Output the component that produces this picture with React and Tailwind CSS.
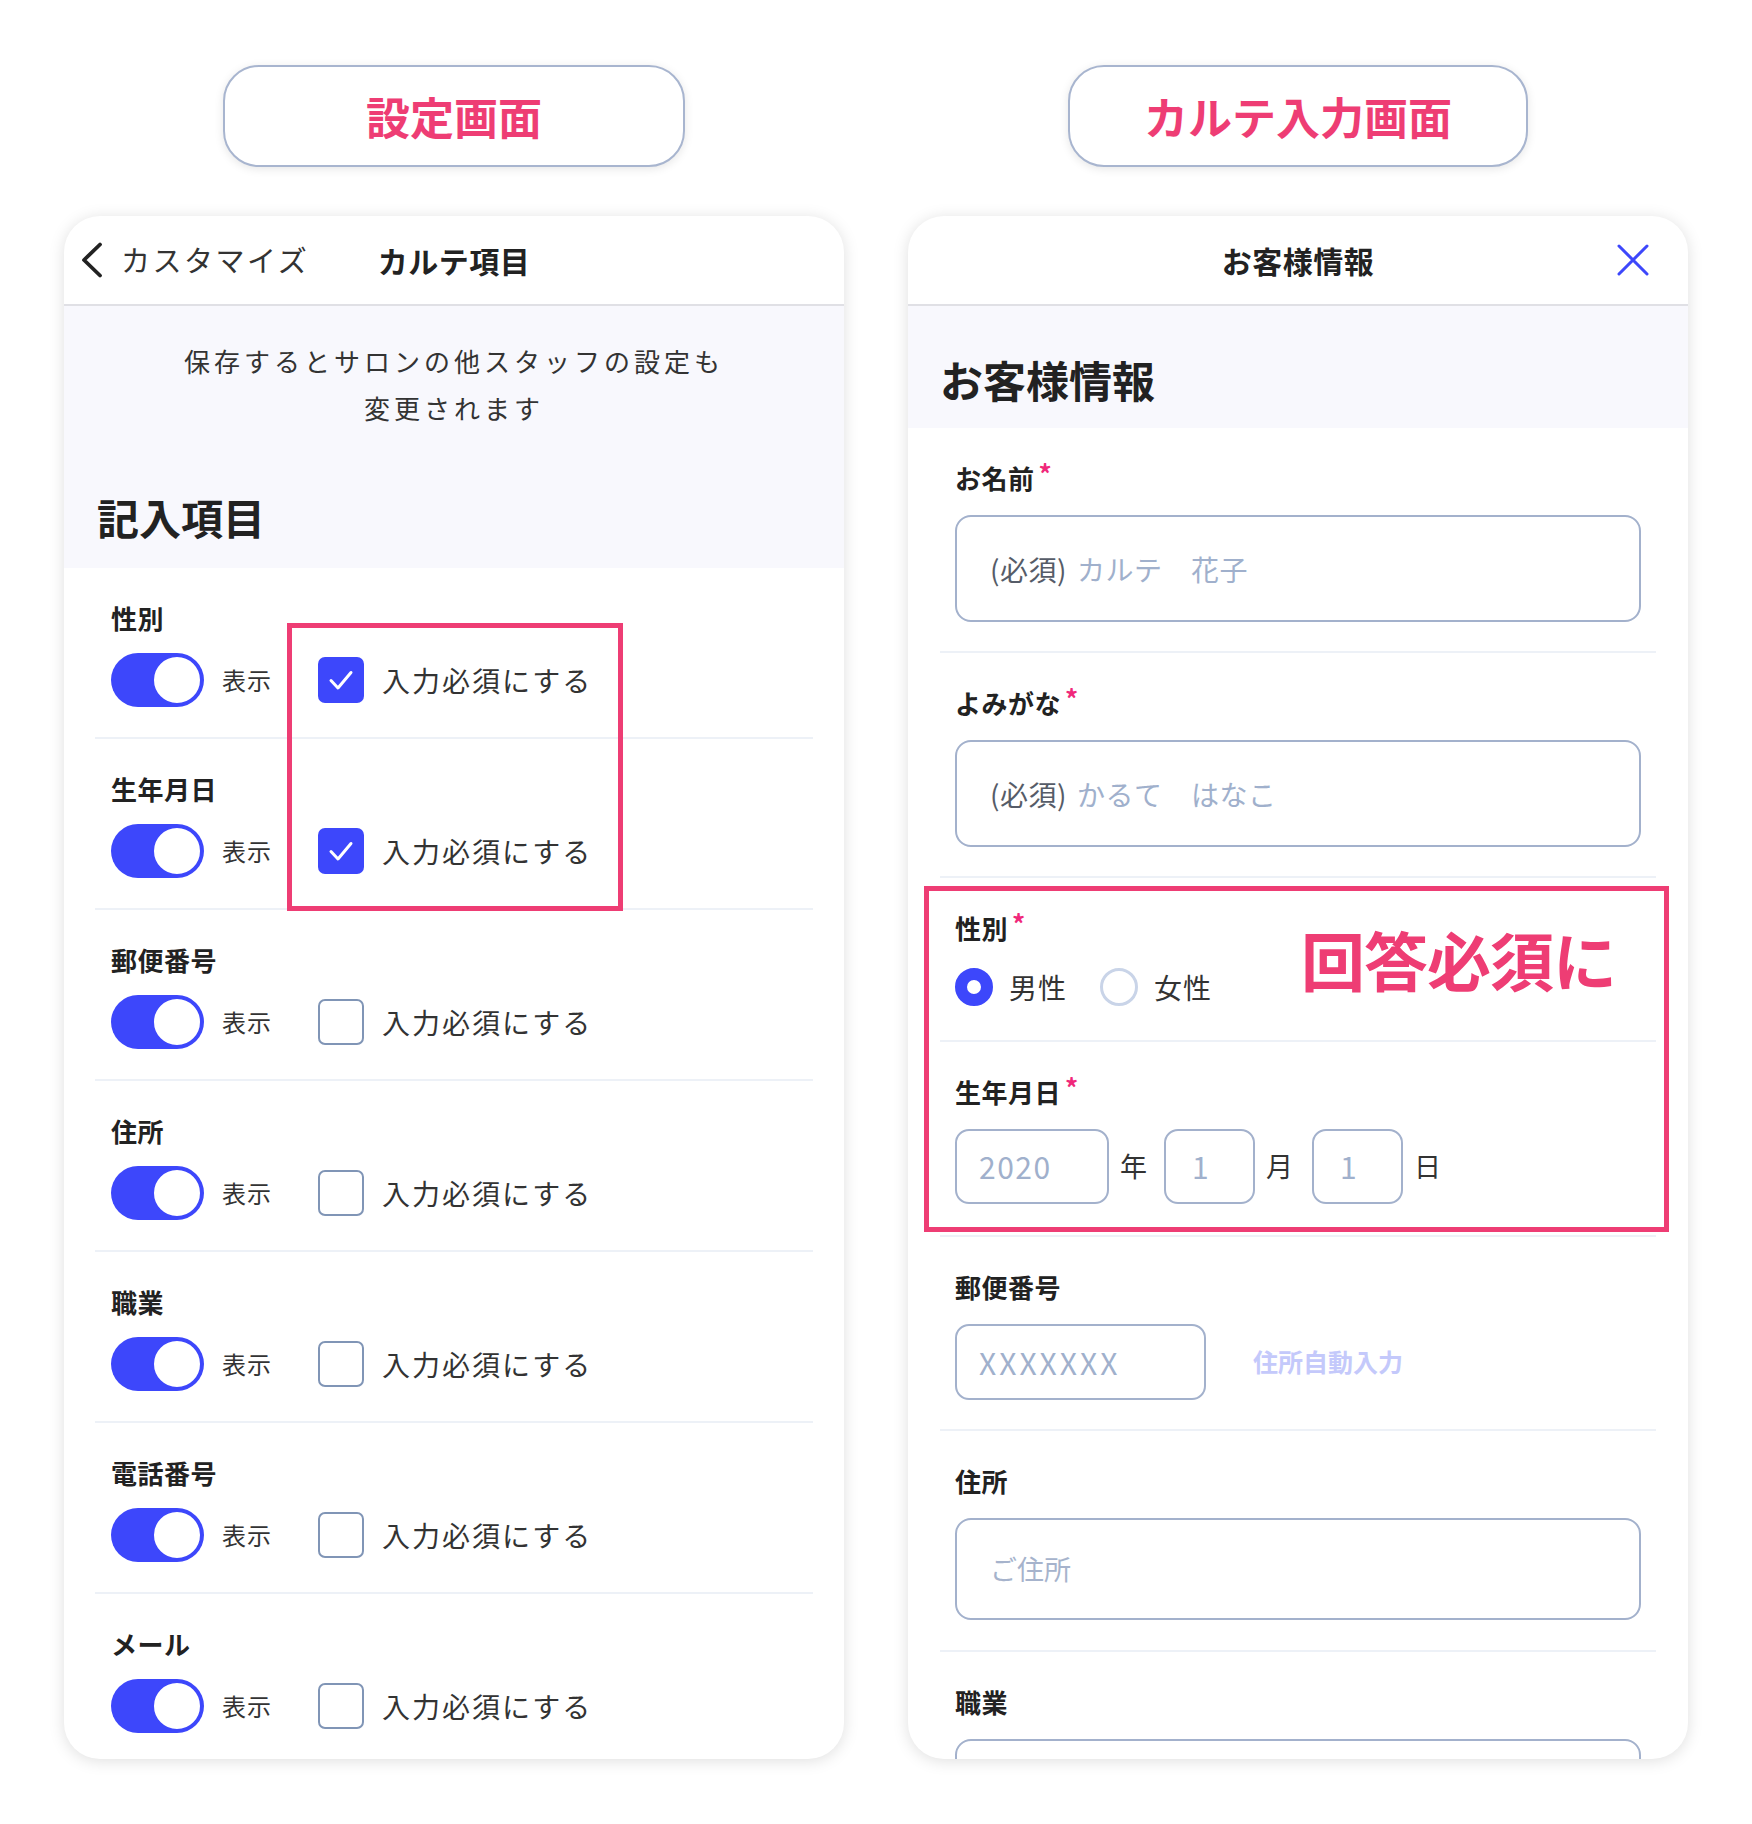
import React from "react";

function TitleButton({ children, wide }) {
  return (
    <div
      className={
        (wide ? "w-[460px]" : "w-[462px]") +
        " h-[102px] shrink-0 rounded-[36px] border-2 border-[#a8b5cf] bg-white shadow-[0_2px_10px_rgba(0,0,0,0.10)] flex items-center justify-center text-[44px] font-bold leading-none text-[#ee3d74]"
      }
    >
      {children}
    </div>
  );
}

function Toggle() {
  return (
    <div className="w-[93px] h-[54px] shrink-0 rounded-full bg-[#3d47fb] flex items-center justify-end pr-[2px]">
      <div className="w-[50px] h-[50px] rounded-full bg-white border-2 border-[#3d47fb]" />
    </div>
  );
}

function Checkbox({ checked }) {
  if (checked) {
    return (
      <div className="ml-[46px] w-[46px] h-[46px] shrink-0 rounded-[7px] bg-[#3d47fb] flex items-center justify-center">
        <svg width="30" height="30" viewBox="0 0 30 30">
          <path d="M5 15.5 L12 23 L25 7.5" stroke="#fff" strokeWidth="3" fill="none" strokeLinecap="round" strokeLinejoin="round" />
        </svg>
      </div>
    );
  }
  return <div className="ml-[46px] w-[46px] h-[46px] shrink-0 rounded-[7px] border-2 border-[#8095b6] bg-white" />;
}

function SettingsRow({ label, checked }) {
  return (
    <div className="h-[171px] shrink-0 border-b-2 border-[#edf1f7] pl-[16px] pt-[35px]">
      <div className="text-[26px] font-bold leading-[30px] tracking-[0.5px] text-[#222]">{label}</div>
      <div className="mt-[20px] h-[54px] flex items-center">
        <Toggle />
        <span className="ml-[18px] text-[24px] tracking-[1px] text-[#333]">表示</span>
        <Checkbox checked={checked} />
        <span className="ml-[18px] text-[28px] tracking-[2px] text-[#333]">入力必須にする</span>
      </div>
    </div>
  );
}

function SettingsCard() {
  const items = [
    ["性別", true],
    ["生年月日", true],
    ["郵便番号", false],
    ["住所", false],
    ["職業", false],
    ["電話番号", false],
    ["メール", false],
  ];
  return (
    <div className="mt-[49px] w-[780px] h-[1543px] rounded-[36px] bg-white shadow-[0_2px_16px_rgba(0,0,0,0.13)] overflow-hidden relative flex flex-col">
      <div className="h-[90px] shrink-0 grid grid-cols-[1fr_auto_1fr] items-center border-b-2 border-[#e0e0e5]">
        <div className="flex items-center pl-[15px]">
          <svg width="26" height="36" viewBox="0 0 26 36">
            <path d="M21 2.5 L5 18 L21 33.5" stroke="#222" strokeWidth="3.8" fill="none" strokeLinecap="round" strokeLinejoin="round" />
          </svg>
          <span className="ml-[16px] text-[29px] tracking-[2.5px] text-[#333]">カスタマイズ</span>
        </div>
        <div className="text-[30px] font-bold tracking-[0.5px] text-[#222]">カルテ項目</div>
        <div />
      </div>
      <div className="h-[262px] shrink-0 bg-[#f8f8fd] pt-[31px]">
        <p className="text-center text-[26px] leading-[47px] tracking-[4px] text-[#333]">
          保存するとサロンの他スタッフの設定も
          <br />
          変更されます
        </p>
        <h2 className="mt-[61px] pl-[33px] text-[42px] font-bold leading-[50px] text-[#222]">記入項目</h2>
      </div>
      <div className="px-[31px] flex flex-col">
        {items.map(([l, c]) => (
          <SettingsRow key={l} label={l} checked={c} />
        ))}
      </div>
      <div className="absolute left-[223px] top-[407px] w-[336px] h-[288px] border-[5px] border-[#ee3d74]" />
    </div>
  );
}

function Label({ children, req }) {
  return (
    <div className="text-[26px] font-bold leading-[30px] tracking-[0.5px] text-[#222] flex items-start">
      <span>{children}</span>
      {req && <span className="ml-[4px] -mt-[3px] text-[26px] leading-[26px] text-[#f0287a]">*</span>}
    </div>
  );
}

function FormRow({ h, children, last }) {
  return (
    <div className={h + " shrink-0 px-[15px] pt-[35px] " + (last ? "" : "border-b-2 border-[#edf1f7]")}>
      {children}
    </div>
  );
}

function FormCard() {
  return (
    <div className="mt-[49px] w-[780px] h-[1543px] rounded-[36px] bg-white shadow-[0_2px_16px_rgba(0,0,0,0.13)] overflow-hidden relative flex flex-col">
      <div className="h-[90px] shrink-0 grid grid-cols-[1fr_auto_1fr] items-center border-b-2 border-[#e0e0e5]">
        <div />
        <div className="text-[30px] font-bold tracking-[0.5px] text-[#222]">お客様情報</div>
        <div className="flex justify-end pr-[38px]">
          <svg width="34" height="34" viewBox="0 0 34 34">
            <path d="M3 3 L31 31 M31 3 L3 31" stroke="#3d47fb" strokeWidth="3" fill="none" strokeLinecap="round" />
          </svg>
        </div>
      </div>
      <div className="h-[122px] shrink-0 bg-[#f8f8fd] pt-[48px] pl-[32px]">
        <h2 className="text-[43px] font-bold leading-[50px] text-[#222]">お客様情報</h2>
      </div>
      <div className="px-[32px] flex flex-col">
        <FormRow h="h-[225px]">
          <Label req>お名前</Label>
          <div className="mt-[22px] h-[107px] rounded-[16px] border-2 border-[#a3b1cc] flex items-center pl-[33px] text-[28px] tracking-[0.5px]">
            <span className="text-[#565c68]">(必須)</span>
            <span className="ml-[10px] text-[#a0b0cc]">カルテ　花子</span>
          </div>
        </FormRow>
        <FormRow h="h-[225px]">
          <Label req>よみがな</Label>
          <div className="mt-[22px] h-[107px] rounded-[16px] border-2 border-[#a3b1cc] flex items-center pl-[33px] text-[28px] tracking-[0.5px]">
            <span className="text-[#565c68]">(必須)</span>
            <span className="ml-[10px] text-[#a0b0cc]">かるて　はなこ</span>
          </div>
        </FormRow>
        <FormRow h="h-[164px]">
          <Label req>性別</Label>
          <div className="mt-[24px] flex items-center h-[40px]">
            <div className="w-[38px] h-[38px] rounded-full border-[12px] border-[#3d47fb] bg-white shrink-0" />
            <span className="ml-[16px] text-[28px] tracking-[1px] text-[#333]">男性</span>
            <div className="ml-[33px] w-[38px] h-[38px] rounded-full border-[3px] border-[#c9d4e8] bg-white shrink-0" />
            <span className="ml-[16px] text-[28px] tracking-[1px] text-[#333]">女性</span>
          </div>
        </FormRow>
        <FormRow h="h-[195px]">
          <Label req>生年月日</Label>
          <div className="mt-[22px] flex items-center">
            <div className="w-[154px] h-[75px] rounded-[14px] border-2 border-[#a3b1cc] flex items-center pl-[22px] text-[30px] tracking-[1.5px] text-[#a0b0cc]">2020</div>
            <span className="ml-[11px] text-[27px] text-[#333]">年</span>
            <div className="ml-[17px] w-[91px] h-[75px] rounded-[14px] border-2 border-[#a3b1cc] flex items-center pl-[26px] text-[30px] text-[#a0b0cc]">1</div>
            <span className="ml-[11px] text-[27px] text-[#333]">月</span>
            <div className="ml-[19px] w-[91px] h-[75px] rounded-[14px] border-2 border-[#a3b1cc] flex items-center pl-[26px] text-[30px] text-[#a0b0cc]">1</div>
            <span className="ml-[11px] text-[27px] text-[#333]">日</span>
          </div>
        </FormRow>
        <FormRow h="h-[194px]">
          <Label>郵便番号</Label>
          <div className="mt-[22px] flex items-center">
            <div className="w-[251px] h-[76px] rounded-[14px] border-2 border-[#a3b1cc] flex items-center pl-[22px] text-[30px] tracking-[3px] text-[#a0b0cc]">XXXXXXX</div>
            <span className="ml-[47px] text-[25px] font-bold text-[#c4c9fb]">住所自動入力</span>
          </div>
        </FormRow>
        <FormRow h="h-[221px]">
          <Label>住所</Label>
          <div className="mt-[22px] h-[102px] rounded-[16px] border-2 border-[#a3b1cc] flex items-center pl-[33px] text-[27px] text-[#a6b3cc]">ご住所</div>
        </FormRow>
        <FormRow h="h-[221px]" last>
          <Label>職業</Label>
          <div className="mt-[22px] h-[102px] rounded-[16px] border-2 border-[#a3b1cc]" />
        </FormRow>
      </div>
      <div className="absolute left-[16px] top-[670px] w-[745px] h-[346px] border-[5px] border-[#ee3d74]" />
      <div className="absolute left-[393px] top-[710px] text-[64px] font-bold leading-none tracking-[-1px] text-[#ee3d74]">回答必須に</div>
    </div>
  );
}

export default function App() {
  return (
    <div className="w-[1752px] h-[1824px] bg-white font-['Noto_Sans_CJK_JP','Noto_Sans',sans-serif] text-[#222] flex gap-[64px] px-[64px] pt-[65px]">
      <div className="w-[780px] flex flex-col items-center">
        <TitleButton>設定画面</TitleButton>
        <SettingsCard />
      </div>
      <div className="w-[780px] flex flex-col items-center">
        <TitleButton wide>カルテ入力画面</TitleButton>
        <FormCard />
      </div>
    </div>
  );
}
